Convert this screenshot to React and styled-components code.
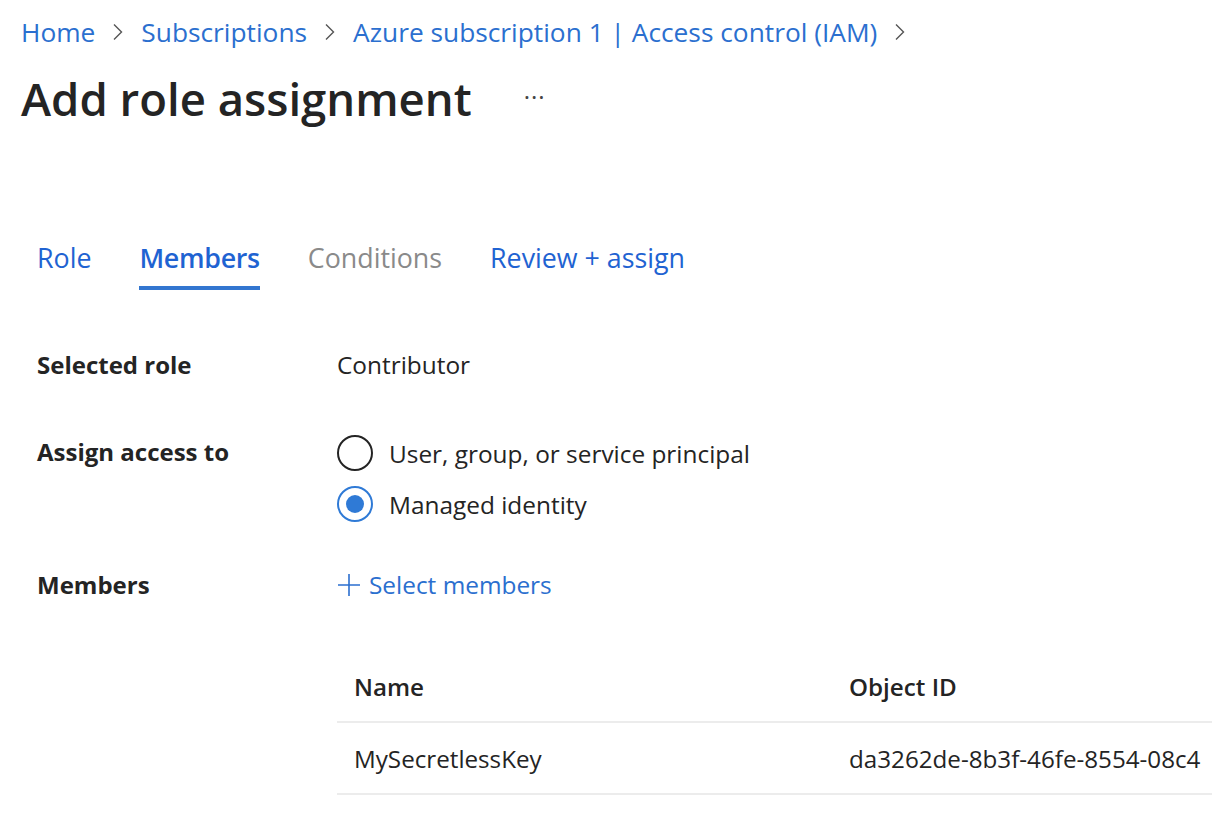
import React from 'react';
import styled, { createGlobalStyle } from 'styled-components';

const GlobalStyle = createGlobalStyle`
  html, body {
    margin: 0;
    padding: 0;
    background: #fff;
  }
  body {
    font-family: "Open Sans", "Noto Sans", sans-serif;
    color: #242424;
    overflow: hidden;
  }
`;

const Page = styled.div`
  width: 1212px;
  height: 816px;
  overflow: hidden;
  padding: 13px 0 0 21px;
  box-sizing: border-box;
`;

const Breadcrumb = styled.nav`
  display: flex;
  align-items: center;
  gap: 17px;
  height: 38px;
  font-size: 26.3px;
  color: #2b6fcf;
`;

const Crumb = styled.a`
  color: inherit;
  text-decoration: none;
  white-space: nowrap;
`;

const Chevron = styled.svg`
  width: 12px;
  height: 18px;
  flex: none;
`;

const TitleRow = styled.div`
  display: flex;
  align-items: center;
  gap: 52px;
  margin-top: 17px;
  height: 60px;
`;

const Title = styled.h1`
  margin: 0;
  font-size: 45.5px;
  font-weight: 600;
  color: #242424;
  white-space: nowrap;
`;

const More = styled.span`
  font-size: 24px;
  color: #444;
  letter-spacing: 1px;
  margin-top: -4px;
`;

const Tabs = styled.div`
  display: flex;
  gap: 48px;
  margin: 111px 0 0 16px;
`;

const Tab = styled.div`
  font-size: 26.8px;
  font-weight: ${p => (p.$active ? 600 : 400)};
  letter-spacing: ${p => (p.$active ? '-0.3px' : '0')};
  color: ${p => (p.$disabled ? '#8a8a8a' : '#1f63d2')};
  padding: 0 0 10px;
  border-bottom: 4px solid ${p => (p.$active ? '#3276d0' : 'transparent')};
  white-space: nowrap;
`;

const Form = styled.div`
  display: grid;
  grid-template-columns: 300px 1fr;
  margin: 58px 0 0 16px;
`;

const Label = styled.div`
  font-size: 24px;
  font-weight: 700;
  color: #242424;
  height: ${p => p.$h}px;
`;

const Value = styled.div`
  font-size: 24.4px;
  color: #242424;
  height: ${p => p.$h}px;
`;

const RadioGroup = styled.div`
  display: flex;
  flex-direction: column;
  gap: 15px;
`;

const RadioRow = styled.label`
  display: flex;
  align-items: center;
  gap: 16px;
  color: #242424;
`;

const RadioCircle = styled.span`
  width: 36px;
  height: 36px;
  box-sizing: border-box;
  border-radius: 50%;
  border: 2px solid ${p => (p.$checked ? '#2f7ad6' : '#242424')};
  display: flex;
  align-items: center;
  justify-content: center;
  flex: none;
  &::after {
    content: '';
    width: 18px;
    height: 18px;
    border-radius: 50%;
    background: #2f7ad6;
    display: ${p => (p.$checked ? 'block' : 'none')};
  }
`;

const AddLink = styled.a`
  display: inline-flex;
  align-items: center;
  gap: 8px;
  color: #2b6fcf;
  text-decoration: none;
`;

const Table = styled.div`
  grid-column: 2;
  margin-top: 23px;
  width: 876px;
`;

const Row = styled.div`
  display: grid;
  grid-template-columns: 495px 1fr;
  align-items: center;
  height: 70px;
  padding-left: 17px;
  border-bottom: 2px solid #ececec;
  font-size: 24.2px;
  font-weight: ${p => (p.$head ? 600 : 400)};
  color: #242424;
  white-space: nowrap;
  overflow: hidden;
`;

const ChevronIcon = () => (
  <Chevron viewBox="0 0 12 18">
    <path d="M2 1.5 L9.5 9 L2 16.5" fill="none" stroke="#555" strokeWidth="1.4" />
  </Chevron>
);

export default function App() {
  const crumbs = ['Home', 'Subscriptions', 'Azure subscription 1 | Access control (IAM)'];
  return (
    <Page>
      <GlobalStyle />
      <Breadcrumb>
        {crumbs.map(c => (
          <React.Fragment key={c}>
            <Crumb href="#">{c}</Crumb>
            <ChevronIcon />
          </React.Fragment>
        ))}
      </Breadcrumb>
      <TitleRow>
        <Title>Add role assignment</Title>
        <More>···</More>
      </TitleRow>
      <Tabs>
        <Tab>Role</Tab>
        <Tab $active>Members</Tab>
        <Tab $disabled>Conditions</Tab>
        <Tab>Review + assign</Tab>
      </Tabs>
      <Form>
        <Label $h={87}>Selected role</Label>
        <Value $h={87}>Contributor</Value>
        <Label $h={133}>Assign access to</Label>
        <Value $h={133}>
          <RadioGroup>
            <RadioRow>
              <RadioCircle />
              User, group, or service principal
            </RadioRow>
            <RadioRow>
              <RadioCircle $checked />
              Managed identity
            </RadioRow>
          </RadioGroup>
        </Value>
        <Label $h={60}>Members</Label>
        <Value $h={60}>
          <AddLink href="#">
            <svg width="24" height="24" viewBox="0 0 24 24">
              <path d="M12 1 V23 M1 12 H23" stroke="#2b6fcf" strokeWidth="1.6" />
            </svg>
            Select members
          </AddLink>
        </Value>
        <Table>
          <Row $head>
            <span>Name</span>
            <span>Object ID</span>
          </Row>
          <Row>
            <span>MySecretlessKey</span>
            <span>da3262de-8b3f-46fe-8554-08c4</span>
          </Row>
        </Table>
      </Form>
    </Page>
  );
}
